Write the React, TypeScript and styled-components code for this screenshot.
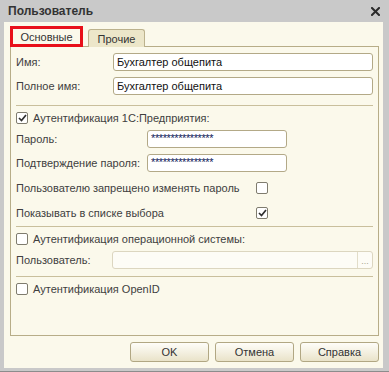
import styled, { createGlobalStyle } from "styled-components";

const GlobalStyle = createGlobalStyle`
  html, body {
    margin: 0;
    padding: 0;
  }
  body {
    font-family: "Liberation Sans", Arial, sans-serif;
    font-size: 11px;
    color: #3d3d3d;
  }
`;

const Window = styled.div`
  width: 389px;
  height: 372px;
  box-sizing: border-box;
  background: #c9c9c9;
  padding: 0 6px 3px 4px;
  border-bottom: 1px solid #8c8c8c;
  display: flex;
  flex-direction: column;
`;

const TitleBar = styled.div`
  height: 22px;
  display: flex;
  align-items: center;
  justify-content: space-between;
  padding: 0 3px 0 4px;
`;

const Title = styled.div`
  font-weight: bold;
  font-size: 12px;
  color: #333;
`;

const Body = styled.div`
  flex: 1;
  background: #fbf9eb;
  padding: 4px 4px 6px 6px;
  display: flex;
  flex-direction: column;
`;

const TabBar = styled.div`
  height: 21px;
  display: flex;
  align-items: flex-end;
  position: relative;
  z-index: 1;
`;

const Highlight = styled.div`
  border: 3px solid #e8101a;
  height: 21px;
  box-sizing: border-box;
  display: flex;
`;

const Tab = styled.div<{ $active?: boolean }>`
  box-sizing: border-box;
  height: ${(p) => (p.$active ? "15px" : "18px")};
  width: ${(p) => (p.$active ? "67px" : "57px")};
  margin-left: ${(p) => (p.$active ? "0" : "5px")};
  display: flex;
  align-items: center;
  justify-content: center;
  background: ${(p) => (p.$active ? "#fbf9eb" : "#ece6c9")};
  border: ${(p) => (p.$active ? "none" : "1px solid #bcb28d")};
  border-bottom: none;
  border-radius: 3px 3px 0 0;
  color: #333;
  font-size: 11px;
  padding-top: 1px;
`;

const Panel = styled.div`
  flex: 1;
  margin-top: -1px;
  border: 1px solid #b7ad88;
  padding: 6px 5px 0 5px;
  display: flex;
  flex-direction: column;
`;

const FieldRow = styled.div<{ $label: number; $top?: number }>`
  display: grid;
  grid-template-columns: ${(p) => p.$label}px 1fr;
  align-items: center;
  height: 18px;
  margin-top: ${(p) => p.$top ?? 0}px;
`;

const Label = styled.span`
  color: #404040;
  white-space: nowrap;
`;

const Input = styled.div<{ $width?: number }>`
  box-sizing: border-box;
  height: 18px;
  width: ${(p) => (p.$width ? `${p.$width}px` : "100%")};
  background: #fff;
  border: 1px solid #b3a987;
  border-radius: 3px;
  padding: 0 3px;
  display: flex;
  align-items: center;
  color: #111;
  white-space: nowrap;
`;

const Stars = styled.span`
  color: #10205a;
  font-size: 11px;
  letter-spacing: -0.4px;
  margin-top: -3px;
`;

const DisabledInput = styled.div`
  box-sizing: border-box;
  height: 18px;
  border: 1px solid #dcd6c0;
  border-radius: 3px;
  background: #fdfcf6;
  display: flex;
  justify-content: flex-end;
`;

const DotsButton = styled.div`
  width: 15px;
  border-left: 1px solid #e2ddc9;
  color: #a9a390;
  font-size: 9px;
  display: flex;
  align-items: flex-end;
  justify-content: center;
  padding-bottom: 2px;
  box-sizing: border-box;
`;

const CheckRow = styled.div<{ $top?: number }>`
  display: flex;
  align-items: center;
  gap: 5px;
  height: 18px;
  margin-top: ${(p) => p.$top ?? 0}px;
`;

const OptionRow = styled.div<{ $top?: number }>`
  display: grid;
  grid-template-columns: 240px 12px;
  align-items: center;
  height: 18px;
  margin-top: ${(p) => p.$top ?? 0}px;
`;

const Box = styled.div`
  box-sizing: border-box;
  width: 12px;
  height: 12px;
  border: 1px solid #7f7c6e;
  border-radius: 2px;
  background: #fff;
  display: flex;
  align-items: center;
  justify-content: center;
`;

const Separator = styled.div<{ $top: number }>`
  height: 1px;
  background: #c9bf9c;
  margin-top: ${(p) => p.$top}px;
`;

const Buttons = styled.div`
  display: flex;
  justify-content: flex-end;
  gap: 6px;
  margin-top: 6px;
`;

const Button = styled.div`
  box-sizing: border-box;
  width: 79px;
  height: 20px;
  border: 1px solid #b1a783;
  border-radius: 3px;
  background: linear-gradient(#fefdf8, #f3efdf 55%, #e9e3c9);
  display: flex;
  align-items: center;
  justify-content: center;
  color: #333;
  font-size: 11px;
`;

const Check = ({ checked }: { checked?: boolean }) => (
  <Box>
    {checked && (
      <svg width="9" height="8" viewBox="0 0 9 8">
        <polyline points="1,4 3.5,6.5 8,1" fill="none" stroke="#2f2f2f" strokeWidth="1.7" />
      </svg>
    )}
  </Box>
);

const CloseIcon = () => (
  <svg width="9" height="9" viewBox="0 0 9 9">
    <path d="M1 1 L8 8 M8 1 L1 8" stroke="#2b2b2b" strokeWidth="2" strokeLinecap="square" />
  </svg>
);

const App = () => {
  return (
    <>
      <GlobalStyle />
      <Window>
        <TitleBar>
          <Title>Пользователь</Title>
          <CloseIcon />
        </TitleBar>
        <Body>
          <TabBar>
            <Highlight>
              <Tab $active>Основные</Tab>
            </Highlight>
            <Tab>Прочие</Tab>
          </TabBar>
          <Panel>
            <FieldRow $label={97}>
              <Label>Имя:</Label>
              <Input>Бухгалтер общепита</Input>
            </FieldRow>
            <FieldRow $label={97} $top={6}>
              <Label>Полное имя:</Label>
              <Input>Бухгалтер общепита</Input>
            </FieldRow>
            <Separator $top={10} />
            <CheckRow $top={3}>
              <Check checked />
              <Label>Аутентификация 1С:Предприятия:</Label>
            </CheckRow>
            <FieldRow $label={131} $top={3}>
              <Label>Пароль:</Label>
              <Input $width={140}>
                <Stars>****************</Stars>
              </Input>
            </FieldRow>
            <FieldRow $label={131} $top={6}>
              <Label>Подтверждение пароля:</Label>
              <Input $width={140}>
                <Stars>****************</Stars>
              </Input>
            </FieldRow>
            <OptionRow $top={7}>
              <Label>Пользователю запрещено изменять пароль</Label>
              <Check />
            </OptionRow>
            <OptionRow $top={7}>
              <Label>Показывать в списке выбора</Label>
              <Check checked />
            </OptionRow>
            <Separator $top={4} />
            <CheckRow $top={3}>
              <Check />
              <Label>Аутентификация операционной системы:</Label>
            </CheckRow>
            <FieldRow $label={96} $top={3}>
              <Label>Пользователь:</Label>
              <DisabledInput>
                <DotsButton>...</DotsButton>
              </DisabledInput>
            </FieldRow>
            <Separator $top={7} />
            <CheckRow $top={3}>
              <Check />
              <Label>Аутентификация OpenID</Label>
            </CheckRow>
          </Panel>
          <Buttons>
            <Button>OK</Button>
            <Button>Отмена</Button>
            <Button>Справка</Button>
          </Buttons>
        </Body>
      </Window>
    </>
  );
};

export default App;
